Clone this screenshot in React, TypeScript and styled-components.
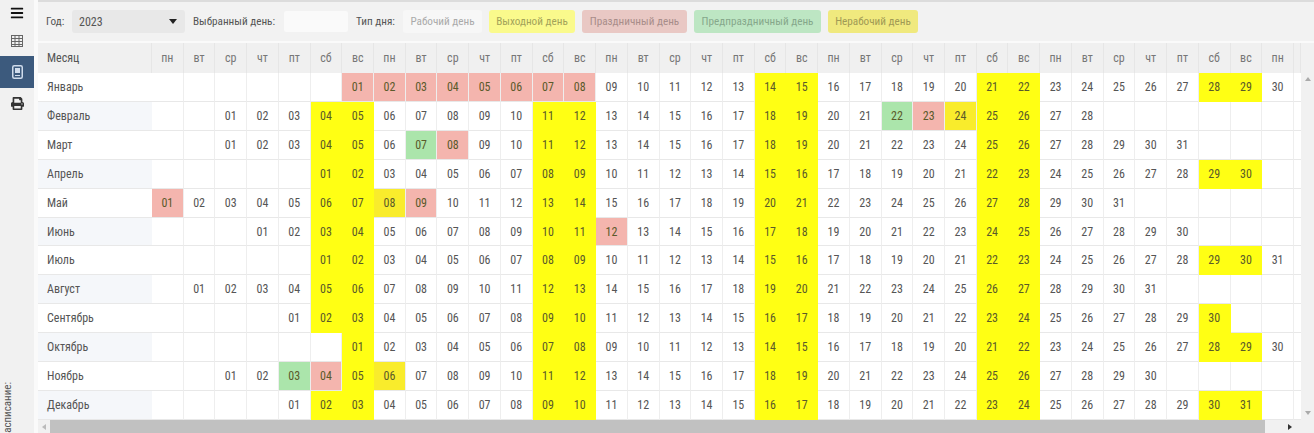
import React from 'react';
import styled, { createGlobalStyle } from 'styled-components';
import { FaBars, FaPrint } from 'react-icons/fa';

type DayKind = 'work' | 'weekend' | 'holiday' | 'preholiday' | 'nonwork';

const kindColors: Record<DayKind, string> = {
  work: '#ffffff',
  weekend: '#ffff14',
  holiday: '#f4b5ae',
  preholiday: '#abe5ab',
  nonwork: '#f9ec2c',
};

const months = ['Январь', 'Февраль', 'Март', 'Апрель', 'Май', 'Июнь', 'Июль', 'Август', 'Сентябрь', 'Октябрь', 'Ноябрь', 'Декабрь'];
const weekDays = ['пн', 'вт', 'ср', 'чт', 'пт', 'сб', 'вс'];
const COLUMNS = 36;

const specialDays: Record<string, DayKind> = {
  '0-1': 'holiday', '0-2': 'holiday', '0-3': 'holiday', '0-4': 'holiday',
  '0-5': 'holiday', '0-6': 'holiday', '0-7': 'holiday', '0-8': 'holiday',
  '1-22': 'preholiday', '1-23': 'holiday', '1-24': 'nonwork',
  '2-7': 'preholiday', '2-8': 'holiday',
  '4-1': 'holiday', '4-8': 'nonwork', '4-9': 'holiday',
  '5-12': 'holiday',
  '10-3': 'preholiday', '10-4': 'holiday', '10-6': 'nonwork',
};

const GlobalStyle = createGlobalStyle`
  html, body {
    margin: 0;
    height: 100%;
    overflow: hidden;
    background: #fafafa;
    font-family: 'Roboto', 'Liberation Sans', sans-serif;
    font-stretch: 85%;
    font-size: 12px;
    color: #555;
  }
  #root { height: 100%; }
`;

const Page = styled.div`
  display: flex;
  height: 433px;
  width: 1314px;
`;

const Sidebar = styled.nav`
  width: 34px;
  flex: none;
  margin-right: 4px;
  background: #f1f1f1;
  display: flex;
  flex-direction: column;
  overflow: hidden;
`;

const NavItem = styled.div<{ $active?: boolean; $height?: number }>`
  height: ${(p) => p.$height ?? 30}px;
  flex: none;
  display: flex;
  align-items: center;
  justify-content: center;
  color: ${(p) => (p.$active ? '#dfe6ee' : '#333')};
  background: ${(p) => (p.$active ? '#3c5a7d' : 'transparent')};
`;

const SideLabel = styled.div`
  margin-top: auto;
  margin-bottom: -6px;
  margin-left: 2px;
  writing-mode: vertical-rl;
  transform: rotate(180deg);
  font-size: 11px;
  line-height: 12px;
  color: #555;
  white-space: nowrap;
`;

const Main = styled.main`
  flex: 1;
  min-width: 0;
  display: flex;
  flex-direction: column;
  border-top: 2px solid #dcdcdc;
`;

const Toolbar = styled.div`
  height: 39px;
  flex: none;
  margin-bottom: 2px;
  padding: 8px 0 0 8px;
  box-sizing: border-box;
  background: #f2f2f2;
  display: flex;
  align-items: flex-start;
  font-size: 11.2px;
  color: #555;
`;

const Label = styled.span<{ $w: number }>`
  width: ${(p) => p.$w}px;
  flex: none;
  line-height: 23px;
  white-space: nowrap;
`;

const YearSelect = styled.div`
  width: 113px;
  height: 23px;
  margin-right: 8px;
  padding: 0 8px 0 7px;
  box-sizing: border-box;
  border-radius: 3px;
  background: #e8e8e8;
  display: flex;
  align-items: center;
  justify-content: space-between;
  font-size: 12px;
  color: #555;
`;

const Caret = styled.i`
  width: 0;
  height: 0;
  border-left: 4px solid transparent;
  border-right: 4px solid transparent;
  border-top: 5px solid #222;
`;

const DayInput = styled.div`
  width: 64px;
  height: 21px;
  margin: 1px 8px 0 0;
  background: #fafafa;
  border-radius: 2px;
`;

const Chip = styled.div<{ $bg: string; $fg: string; $w: number }>`
  width: ${(p) => p.$w}px;
  height: 23px;
  margin-right: 7px;
  border-radius: 3px;
  background: ${(p) => p.$bg};
  color: ${(p) => p.$fg};
  display: flex;
  align-items: center;
  justify-content: center;
  white-space: nowrap;
`;

const TableArea = styled.div`
  flex: 1;
  min-height: 0;
  display: grid;
  grid-template-columns: 1fr 13px;
  grid-template-rows: 1fr 13px;
`;

const CalendarGrid = styled.div`
  display: grid;
  grid-template-columns: 114px repeat(${COLUMNS}, 1fr) 7px;
  grid-template-rows: 30px repeat(12, 1fr);
  background: #fff;
  min-height: 0;
`;

const HeadCell = styled.div<{ $left?: boolean }>`
  background: #f0f0f0;
  color: ${(p) => (p.$left ? '#555' : '#777')};
  border-right: 1px solid #e6e6e6;
  display: flex;
  align-items: center;
  justify-content: ${(p) => (p.$left ? 'flex-start' : 'center')};
  padding-left: ${(p) => (p.$left ? '9px' : '0')};
`;

const MonthCell = styled.div<{ $alt: boolean }>`
  background: ${(p) => (p.$alt ? '#f5f7fa' : '#fff')};
  border-bottom: 1px solid #e8e8e8;
  display: flex;
  align-items: center;
  padding-left: 9px;
  color: #555;
`;

const DayCell = styled.div<{ $kind: DayKind }>`
  background: ${(p) => kindColors[p.$kind]};
  border-right: 1px solid ${(p) => (p.$kind === 'weekend' ? 'transparent' : '#eeeeee')};
  border-bottom: 1px solid ${(p) => (p.$kind === 'weekend' ? 'transparent' : '#e8e8e8')};
  background-clip: border-box;
  display: flex;
  align-items: center;
  justify-content: center;
  color: ${(p) => (p.$kind === 'work' ? '#555' : '#5a5a2a')};
`;

const EndCell = styled.div`
  background: #fff;
  border-bottom: 1px solid #e8e8e8;
`;

const VerticalBar = styled.div`
  background: #f1f1f1;
  display: flex;
  flex-direction: column;
  justify-content: space-between;
  align-items: center;
  padding: 33px 0 4px;
  color: #aaa;
`;

const HorizontalBar = styled.div`
  background: #f1f1f1;
  display: flex;
  align-items: center;
  padding-right: 5px;
`;

const ArrowBox = styled.div<{ $w: number; $dark?: boolean }>`
  width: ${(p) => p.$w}px;
  flex: none;
  display: flex;
  justify-content: center;
  color: ${(p) => (p.$dark ? '#333' : '#bbb')};
`;

const Thumb = styled.div`
  width: 1215px;
  height: 13px;
  flex: none;
  background: #c1c1c1;
`;

const Spacer = styled.div`
  flex: 1;
`;

const Corner = styled.div`
  background: #f1f1f1;
`;

function Arrow({ dir }: { dir: 'up' | 'down' | 'left' | 'right' }) {
  const points = {
    up: '0,5 3,1 6,5',
    down: '0,1 3,5 6,1',
    left: '5,0 1,3 5,6',
    right: '1,0 5,3 1,6',
  }[dir];
  return (
    <svg width="6" height="6" viewBox="0 0 6 6">
      <polygon points={points} fill="currentColor" />
    </svg>
  );
}

function TableIcon() {
  return (
    <svg width="12" height="12" viewBox="0 0 12 12" fill="none" stroke="#666" strokeWidth="1">
      <rect x="0.5" y="0.5" width="11" height="11" />
      <path d="M0.5 3.5h11M0.5 6.5h11M0.5 9.5h11M4 .5v11M8 .5v11" />
    </svg>
  );
}

function BookIcon() {
  return (
    <svg width="11" height="14" viewBox="0 0 11 14">
      <rect x="0.75" y="0.75" width="9.5" height="12.5" rx="1.5" fill="none" stroke="#cfdcec" strokeWidth="1.5" />
      <rect x="3" y="3" width="5" height="5" fill="#cfdcec" />
      <rect x="3" y="10" width="5" height="1" fill="#cfdcec" />
    </svg>
  );
}

function monthCells(month: number) {
  const offset = (new Date(2023, month, 1).getDay() + 6) % 7;
  const total = new Date(2023, month + 1, 0).getDate();
  const cells: React.ReactNode[] = [];
  for (let col = 0; col < COLUMNS; col++) {
    const day = col - offset + 1;
    if (day < 1 || day > total) {
      cells.push(<DayCell key={col} $kind="work" />);
      continue;
    }
    const weekend = col % 7 >= 5;
    const kind = specialDays[`${month}-${day}`] ?? (weekend ? 'weekend' : 'work');
    cells.push(
      <DayCell key={col} $kind={kind}>
        {String(day).padStart(2, '0')}
      </DayCell>
    );
  }
  return cells;
}

export default function App() {
  return (
    <Page>
      <GlobalStyle />
      <Sidebar>
        <NavItem $height={26}><FaBars size={14} color="#111" /></NavItem>
        <NavItem><TableIcon /></NavItem>
        <NavItem $active $height={32}><BookIcon /></NavItem>
        <NavItem><FaPrint size={13} /></NavItem>
        <SideLabel>Расписание:</SideLabel>
      </Sidebar>
      <Main>
        <Toolbar>
          <Label $w={26}>Год:</Label>
          <YearSelect>2023<Caret /></YearSelect>
          <Label $w={91}>Выбранный день:</Label>
          <DayInput />
          <Label $w={47}>Тип дня:</Label>
          <Chip $bg="#f7f7f7" $fg="#aaa" $w={79}>Рабочий день</Chip>
          <Chip $bg="#fafa8c" $fg="#a3a35a" $w={86}>Выходной день</Chip>
          <Chip $bg="#e9c8c4" $fg="#a88d8a" $w={105}>Праздничный день</Chip>
          <Chip $bg="#bde6c3" $fg="#86a88b" $w={127}>Предпраздничный день</Chip>
          <Chip $bg="#f0e97e" $fg="#a09a55" $w={90}>Нерабочий день</Chip>
        </Toolbar>
        <TableArea>
          <CalendarGrid>
            <HeadCell $left>Месяц</HeadCell>
            {Array.from({ length: COLUMNS }, (_, i) => (
              <HeadCell key={i}>{weekDays[i % 7]}</HeadCell>
            ))}
            <HeadCell />
            {months.map((name, m) => (
              <React.Fragment key={name}>
                <MonthCell $alt={m % 2 === 1}>{name}</MonthCell>
                {monthCells(m)}
                <EndCell />
              </React.Fragment>
            ))}
          </CalendarGrid>
          <VerticalBar>
            <Arrow dir="up" />
            <Arrow dir="down" />
          </VerticalBar>
          <HorizontalBar>
            <ArrowBox $w={12}><Arrow dir="left" /></ArrowBox>
            <Thumb />
            <Spacer />
            <ArrowBox $w={12} $dark><Arrow dir="right" /></ArrowBox>
          </HorizontalBar>
          <Corner />
        </TableArea>
      </Main>
    </Page>
  );
}
